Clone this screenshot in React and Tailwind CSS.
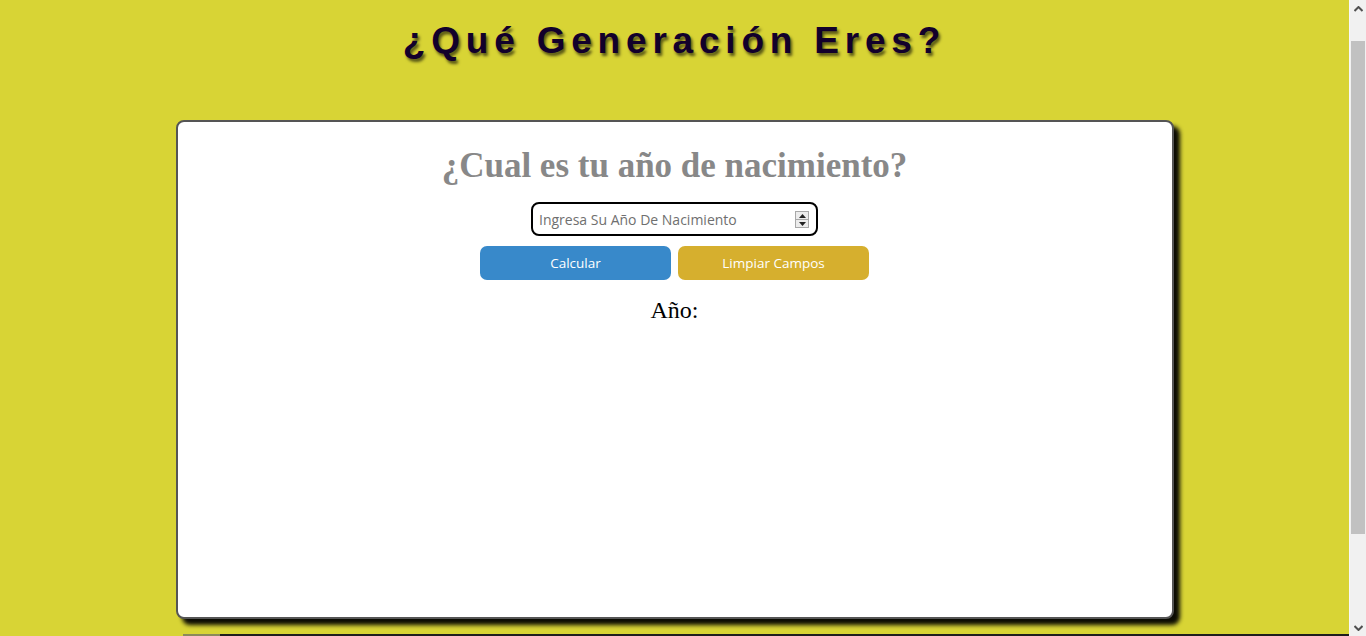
import React from "react";

export default function App() {
  return (
    <div className="h-[636px] overflow-hidden flex bg-[#d8d435]" style={{ fontFamily: "'Liberation Sans', Arial, sans-serif" }}>
      <div className="w-[1349px] flex flex-col">
        <h1 className="pt-[20px] text-center text-[37px] leading-[41px] font-bold tracking-[5.8px] text-[#12002b] [text-shadow:2px_3px_3px_rgba(0,0,0,0.6)] font-['Liberation_Sans',Arial,sans-serif]">
          ¿Qué Generación Eres?
        </h1>

        <div className="mt-[59px] mx-auto w-[998px] h-[499px] shrink-0 bg-white border-2 border-[#555] rounded-[8px] shadow-[6px_6px_4px_rgba(0,0,0,0.95)] flex flex-col items-center pt-[24px]">
          <h2 className="text-[35px] leading-[39px] font-bold text-[#888] font-['Liberation_Serif','Times_New_Roman',serif]">
            ¿Cual es tu año de nacimiento?
          </h2>

          <div className="relative mt-[17px] w-[287px] h-[34px] border-2 border-black rounded-[8px] bg-white flex items-center pl-[6px]">
            <input
              type="text"
              placeholder="Ingresa Su Año De Nacimiento"
              className="w-[250px] outline-none bg-transparent text-[14px] text-[#333] placeholder:text-[#6f6f6f] font-['Open_Sans',sans-serif]"
            />
            <div className="absolute right-[7px] top-[7px] w-[14px] h-[17px] border border-[#a8a8a8] bg-[#ececec] flex flex-col">
              <div className="flex-1 flex items-center justify-center border-b border-[#a8a8a8]">
                <svg width="7" height="4" viewBox="0 0 7 4"><path d="M3.5 0L7 4H0z" fill="#222" /></svg>
              </div>
              <div className="flex-1 flex items-center justify-center">
                <svg width="7" height="4" viewBox="0 0 7 4"><path d="M0 0h7L3.5 4z" fill="#222" /></svg>
              </div>
            </div>
          </div>

          <div className="mt-[10px] flex gap-[7px]">
            <button className="w-[191px] h-[34px] rounded-[7px] bg-[#3889ca] text-white text-[13.5px] font-['Open_Sans',sans-serif]">
              Calcular
            </button>
            <button className="w-[191px] h-[34px] rounded-[7px] bg-[#d6af2e] text-white text-[13.5px] font-['Open_Sans',sans-serif]">
              Limpiar Campos
            </button>
          </div>

          <p className="mt-[17px] text-[24px] leading-[27px] text-black font-['Liberation_Serif','Times_New_Roman',serif]">
            Año:
          </p>
        </div>

        <div className="mt-[15px] ml-[183px] h-[143px] shrink-0 flex">
          <div className="w-[37px] border-t-2 border-[#8a8a5a]" />
          <div className="flex-1 border-t-2 border-[#1e1e1e]" />
        </div>
      </div>

      <div className="w-[17px] h-[636px] shrink-0 bg-[#f1f1f1] border-l border-[#f8f8f8] flex flex-col items-center">
        <div className="h-[17px] w-full flex items-center justify-center">
          <svg width="9" height="6" viewBox="0 0 9 6"><path d="M0.5 5L4.5 1L8.5 5" fill="none" stroke="#505050" strokeWidth="2" /></svg>
        </div>
        <div className="mt-[24px] w-[14px] h-[493px] bg-[#c1c1c1]" />
        <div className="flex-1" />
        <div className="h-[17px] w-full flex items-center justify-center">
          <svg width="9" height="6" viewBox="0 0 9 6"><path d="M0.5 1L4.5 5L8.5 1" fill="none" stroke="#505050" strokeWidth="2" /></svg>
        </div>
      </div>
    </div>
  );
}
